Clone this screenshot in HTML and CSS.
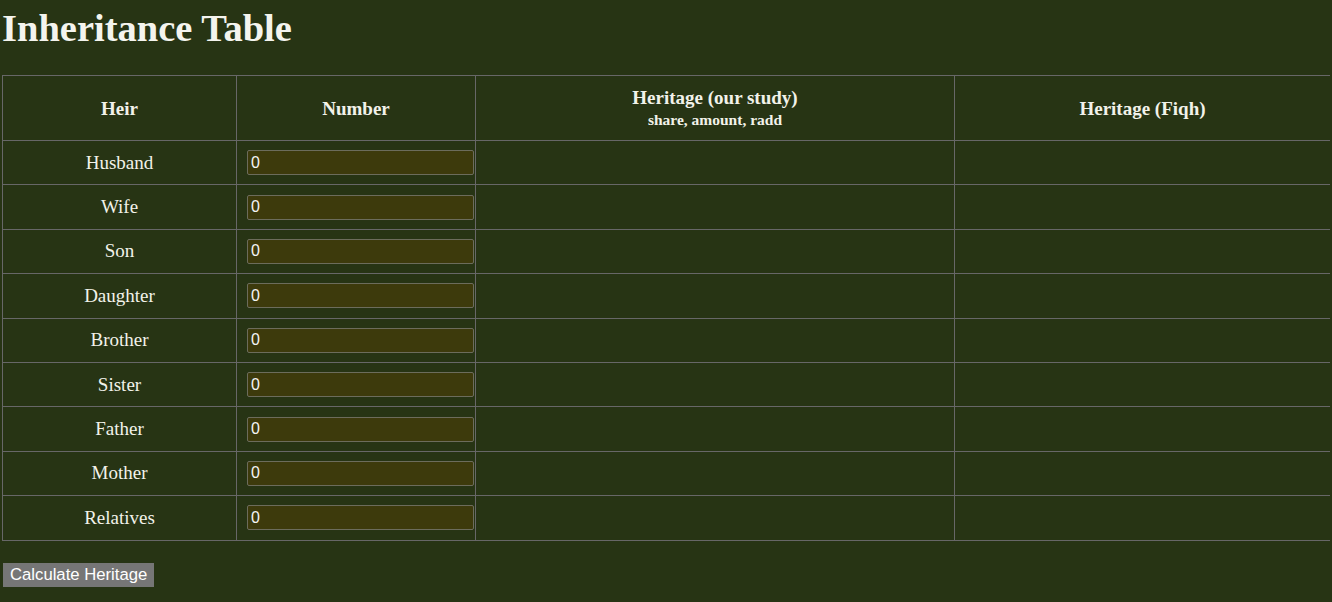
FILE: index.html
```html
<!DOCTYPE html>
<html>
<head>
<meta charset="utf-8">
<title>Inheritance Table</title>
<link rel="stylesheet" href="styles.css">
</head>
<body>
<h1 class="title">Inheritance Table</h1>
<table class="heirs">
  <colgroup>
    <col class="c-heir">
    <col class="c-num">
    <col class="c-study">
    <col class="c-fiqh">
  </colgroup>
  <thead>
    <tr class="head-row">
      <th>Heir</th>
      <th>Number</th>
      <th>Heritage (our study)<br><span class="sub">share, amount, radd</span></th>
      <th>Heritage (Fiqh)</th>
    </tr>
  </thead>
  <tbody>
    <tr><td>Husband</td><td class="num"><input class="count" type="text" value="0"></td><td></td><td></td></tr>
    <tr><td>Wife</td><td class="num"><input class="count" type="text" value="0"></td><td></td><td></td></tr>
    <tr><td>Son</td><td class="num"><input class="count" type="text" value="0"></td><td></td><td></td></tr>
    <tr><td>Daughter</td><td class="num"><input class="count" type="text" value="0"></td><td></td><td></td></tr>
    <tr><td>Brother</td><td class="num"><input class="count" type="text" value="0"></td><td></td><td></td></tr>
    <tr><td>Sister</td><td class="num"><input class="count" type="text" value="0"></td><td></td><td></td></tr>
    <tr><td>Father</td><td class="num"><input class="count" type="text" value="0"></td><td></td><td></td></tr>
    <tr><td>Mother</td><td class="num"><input class="count" type="text" value="0"></td><td></td><td></td></tr>
    <tr><td>Relatives</td><td class="num"><input class="count" type="text" value="0"></td><td></td><td></td></tr>
  </tbody>
</table>
<div class="actions">
  <button class="calc" type="button">Calculate Heritage</button>
</div>
</body>
</html>
```
FILE: styles.css
```css
html, body {
  background: #273414;
}
body {
  margin: 2px;
  font-family: "Liberation Serif", "Times New Roman", serif;
  color: #f2f2ea;
}
.title {
  font-size: 38.5px;
  font-weight: bold;
  margin: 4px 0 25px 0;
  line-height: 44px;
  color: #f4f4ee;
}
.heirs {
  width: 1328px;
  table-layout: fixed;
  border-collapse: collapse;
  border: 1px solid #676767;
}
.c-heir { width: 234px; }
.c-num { width: 239px; }
.c-study { width: 479px; }
.c-fiqh { width: 376px; }
.heirs th, .heirs td {
  border: 1px solid #676767;
  text-align: center;
  padding: 0;
}
.heirs th {
  font-size: 19px;
  font-weight: bold;
  height: 64px;
  line-height: 21px;
}
.sub {
  font-size: 15.5px;
  line-height: 19px;
}
.heirs td {
  font-size: 19px;
  height: 43.4px;
}
.heirs td.num {
  text-align: left;
  padding-left: 10px;
}
.count {
  box-sizing: border-box;
  width: 227px;
  height: 25px;
  background: #3d3a0c;
  border: 1px solid #6c6c5c;
  border-radius: 2px;
  color: #f4f4f4;
  font-family: "Liberation Sans", Arial, sans-serif;
  font-size: 16px;
  padding: 0 3px;
  display: block;
}
.actions {
  margin-top: 22px;
}
.calc {
  background: #767676;
  color: #ffffff;
  border: none;
  font-family: "Liberation Sans", Arial, sans-serif;
  font-size: 16.7px;
  height: 24px;
  padding: 0 7px;
  margin-left: 1px;
}
```
